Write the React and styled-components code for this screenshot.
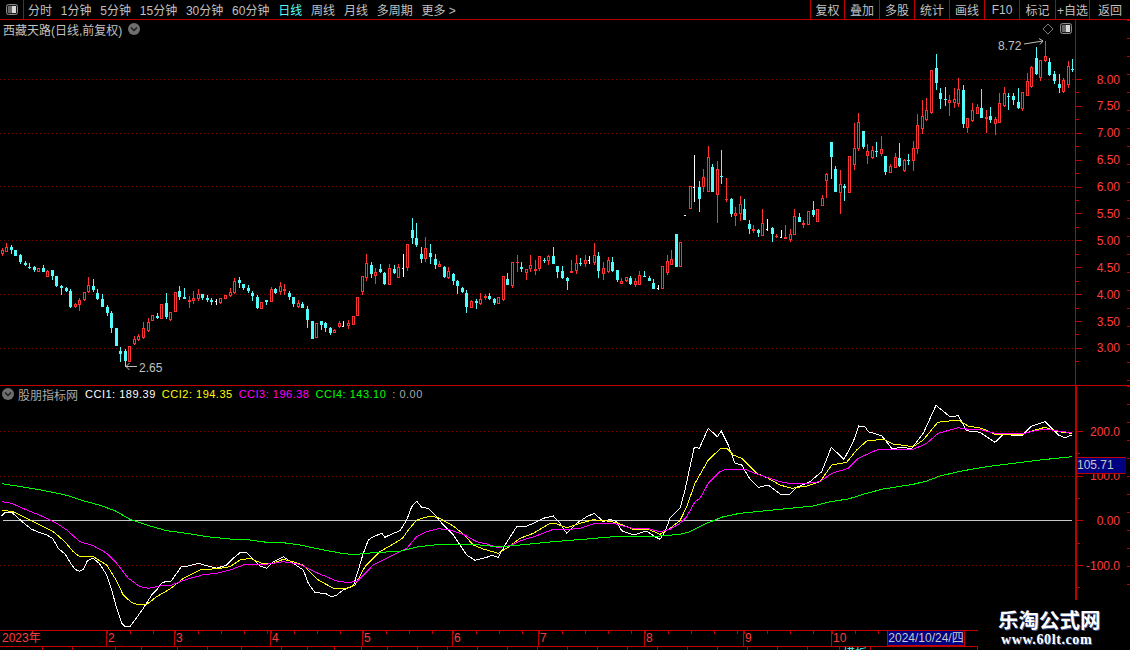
import React from "react";
import styled, { createGlobalStyle } from "styled-components";

const RED_LINE = "#c00000";
const RED_TEXT = "#ff3c3c";
const GRID_RED = "#7c0000";
const CYAN = "#54fcfc";
const CJK = `"Liberation Sans", "Noto Sans CJK SC", sans-serif`;

// candles read off the chart: [x, body top, body bottom, high, low, kind], in 3x crops
const candleRuns = [
  {
    x0: 0, y0: 210,
    rows: [
      [7,121,133,115,138,"r"],[19,111,125,99,127,"r"],[34,110,120,105,132,"c"],[46,120,137,120,137,"c"],
      [61,135,155,131,161,"c"],[76,158,165,153,169,"c"],[88,172,172,160,177,"c"],[103,172,180,168,186,"c"],
      [115,174,186,174,186,"r"],[130,174,186,165,186,"c"],[142,184,201,180,202,"r"],[157,180,198,180,210,"c"],
      [169,198,228,198,232,"c"],[184,228,233,225,255,"c"],[199,234,242,231,246,"c"],[211,243,291,238,294,"c"],
      [226,282,291,279,294,"r"],[238,271,285,265,303,"r"],[253,247,271,245,273,"r"],[265,225,247,201,249,"r"],
      [280,228,241,207,245,"c"],[292,249,267,237,270,"c"],[307,267,291,252,291,"c"],[322,291,309,285,318,"c"],
      [334,309,354,303,369,"c"],[349,354,408,354,408,"c"],[361,423,431,411,456,"c"],[376,423,453,417,470,"c"],
      [388,408,456,408,456,"r"],[403,387,402,378,405,"r"],[415,378,390,372,393,"r"],[430,354,384,336,387,"r"],
      [445,336,363,324,366,"r"],[457,316,333,316,333,"r"],[472,318,324,309,327,"c"],[484,282,327,282,327,"r"],
      [499,279,321,249,327,"c"],[511,306,330,306,333,"r"],[526,246,306,246,306,"r"],[538,243,261,228,270,"c"],
      [553,262,266,234,267,"c"],[568,271,274,258,294,"r"],[580,264,273,243,282,"r"],[595,252,267,237,273,"r"],
      [607,252,264,252,270,"c"],[622,264,270,255,276,"c"],[634,270,274,264,285,"c"],[649,273,273,268,285,"w"],
      [661,264,279,264,282,"r"],[676,255,266,255,266,"r"],[691,246,258,234,261,"r"],[703,213,249,204,252,"r"],
      [718,210,219,201,234,"c"],[730,222,234,222,240,"c"],[745,234,243,225,249,"c"],[757,249,258,243,273,"c"],
      [772,261,294,255,297,"c"],[784,276,296,276,296,"r"],[799,270,274,270,285,"c"],[814,237,275,231,276,"r"],
      [826,237,249,234,252,"c"],[841,228,246,216,255,"r"],[853,237,243,222,255,"r"],[868,249,261,243,270,"c"],
      [880,261,282,261,291,"c"],[895,279,291,270,294,"r"],[907,282,294,276,294,"c"],[922,297,330,288,354,"c"],
      [937,333,387,333,387,"c"],[949,339,384,339,384,"r"],[964,333,345,333,360,"c"],[976,339,354,336,366,"c"],
      [991,354,369,351,375,"c"],[1003,360,369,357,369,"r"],[1018,339,351,333,354,"r"],[1030,348,348,333,348,"w"],
      [1045,339,348,330,357,"r"],[1060,318,345,318,345,"r"],[1072,262,318,262,318,"r"],
    ],
  },
  {
    x0: 340, y0: 210,
    rows: [
      [67,198,246,198,255,"r"],[79,159,204,132,213,"r"],[94,165,192,156,204,"c"],[106,186,198,174,222,"r"],
      [121,177,186,162,189,"c"],[133,189,222,186,225,"c"],[148,174,225,162,225,"r"],[163,177,189,165,192,"c"],
      [175,171,204,162,204,"r"],[190,175,175,132,201,"w"],[202,102,174,102,183,"r"],[217,60,84,24,102,"c"],
      [229,84,105,39,111,"c"],[244,132,147,111,159,"c"],[256,114,147,81,156,"r"],[271,129,141,102,162,"c"],
      [286,147,165,132,177,"c"],[298,162,171,153,171,"r"],[313,171,201,168,204,"c"],[325,183,204,171,207,"r"],
      [340,192,213,189,225,"c"],[352,213,228,210,252,"c"],[367,234,246,231,249,"c"],[379,249,291,240,309,"c"],
      [394,273,294,270,294,"r"],[409,273,279,267,297,"c"],[421,267,282,249,285,"r"],[436,258,264,252,270,"r"],
      [448,258,267,249,270,"c"],[463,267,279,264,285,"c"],[475,261,282,261,282,"r"],[490,198,270,198,273,"r"],
      [502,207,225,189,225,"c"],[517,156,228,156,234,"r"],[532,156,156,135,186,"r"],[544,171,174,156,186,"c"],
      [559,177,189,177,210,"r"],[571,165,177,135,186,"r"],[586,177,183,150,195,"r"],[598,138,177,138,183,"r"],
      [613,150,150,144,159,"c"],[625,138,153,135,165,"r"],[640,138,162,111,162,"c"],[652,168,186,168,204,"c"],
      [667,183,204,168,207,"c"],[682,204,213,201,240,"c"],[694,183,189,150,189,"r"],[709,159,183,135,192,"r"],
      [721,159,159,144,168,"c"],[736,150,162,135,171,"r"],[748,150,150,138,162,"w"],[763,135,159,99,165,"r"],
      [775,138,183,126,204,"c"],[790,174,192,156,210,"r"],[805,150,186,141,189,"r"],[817,156,183,141,186,"c"],
      [832,180,210,180,216,"c"],[844,213,221,204,222,"r"],[859,201,213,201,216,"r"],[871,204,222,198,225,"c"],
      [886,213,225,204,231,"r"],[898,195,225,183,225,"r"],[913,198,198,183,201,"c"],[928,204,213,198,213,"c"],
      [940,219,237,207,237,"c"],[955,234,234,225,240,"w"],[967,168,237,168,237,"r"],[982,153,189,135,195,"r"],
      [994,147,165,120,165,"r"],[1009,72,171,72,171,"c"],[1021,96,171,96,171,"r"],
    ],
  },
  {
    x0: 660, y0: 130,
    rows: [
      [75,256,256,256,256,"w"],[91,168,236,168,236,"r"],[103,170,170,75,216,"w"],[118,171,207,153,246,"c"],
      [130,141,171,117,186,"r"],[145,81,186,48,186,"r"],[157,111,186,102,186,"c"],[172,117,194,93,279,"r"],
      [184,139,139,60,162,"c"],[199,208,208,144,216,"r"],[214,207,252,204,261,"c"],[226,249,258,231,288,"r"],
      [241,222,251,198,273,"r"],[253,237,270,207,270,"c"],[268,282,297,270,312,"c"],[280,297,303,285,309,"r"],
      [295,300,309,297,321,"c"],[307,279,318,237,318,"r"],[322,298,298,267,303,"w"],[337,294,312,291,336,"c"],
      [349,318,318,312,324,"r"],[364,322,322,300,324,"w"],[376,321,327,285,327,"r"],[391,312,330,297,336,"r"],
      [403,258,315,237,315,"r"],[418,261,276,249,276,"c"],[430,279,285,270,294,"r"],[445,243,285,243,285,"r"],
      [460,240,255,213,261,"c"],[472,237,276,237,276,"r"],[487,204,228,195,228,"r"],[499,132,153,129,204,"r"],
      [514,36,81,36,147,"c"],[526,117,186,108,186,"c"],[541,162,189,120,252,"r"],[553,169,174,162,213,"c"],
      [568,78,189,78,189,"r"],[583,54,105,-20,120,"r"],[595,-24,57,-51,63,"r"],[610,3,51,3,57,"c"],
      [622,63,78,42,102,"r"],[637,60,84,48,87,"r"],[649,64,64,36,81,"c"],[664,57,72,18,78,"r"],
      [676,78,126,78,135,"c"],[691,108,129,102,129,"r"],[706,81,114,69,114,"r"],[718,84,108,39,111,"c"],
      [733,90,123,87,126,"r"],[745,91,91,72,105,"c"],[760,54,93,33,123,"r"],
    ],
  },
  {
    x0: 900, y0: 40,
    rows: [
      [52,255,327,222,342,"r"],[67,228,267,180,282,"r"],[79,210,240,174,243,"r"],[94,90,219,90,222,"r"],
      [109,84,129,42,150,"c"],[121,159,177,144,207,"c"],[136,178,178,141,198,"c"],[148,180,189,165,228,"r"],
      [163,177,189,144,204,"r"],[175,147,192,114,201,"r"],[190,150,252,135,264,"c"],[202,234,264,234,279,"r"],
      [217,210,243,189,246,"r"],[232,201,222,192,222,"r"],[244,204,234,147,234,"c"],[259,231,237,210,279,"r"],
      [271,228,240,201,249,"c"],[286,237,252,231,285,"r"],[298,189,249,159,249,"r"],[313,159,198,141,201,"r"],
      [325,168,168,159,210,"c"],[340,168,180,159,195,"c"],[355,186,204,144,207,"c"],[367,156,207,156,213,"r"],
      [382,123,168,99,168,"r"],[394,81,141,78,144,"r"],[409,54,102,21,105,"c"],[421,60,114,60,123,"r"],
      [436,48,63,3,66,"r"],[448,66,105,54,108,"c"],[463,102,123,93,132,"c"],[478,132,144,102,159,"c"],
      [490,120,156,114,159,"r"],[505,78,135,63,144,"r"],[517,87,87,57,96,"c"],
    ],
  },
];

// each curve is three runs of points, read from crops at these origins
const CROP_A = [0, 480];
const CROP_B = [340, 480];
const CROP_C = [640, 400];

const curves = [
  {
    color: "#ffffff",
    a: [5,107,15,97,35,97,50,110,70,128,95,148,115,156,140,165,158,175,175,205,195,222,212,250,225,268,238,274,250,268,262,243,278,234,298,250,320,285,335,330,350,385,365,430,375,440,390,440,405,420,430,385,455,345,470,330,485,310,500,303,512,305,530,280,545,258,565,258,595,250,620,257,650,265,680,255,700,235,720,218,740,218,760,238,780,258,800,265,820,245,850,230,880,250,910,270,925,310,945,338,975,340,995,350,1010,345,1030,330,1060,318,1075,270,1090,220,1105,180,1120,170,1145,160,1155,172,1175,162,1200,152],
    b: [200,120,215,80,230,64,245,82,265,85,285,105,310,135,340,165,360,195,380,225,405,241,440,232,455,226,475,232,495,195,530,140,555,140,575,132,610,115,640,108,660,130,680,160,710,130,740,110,763,100,790,125,810,118,830,125,845,152,880,165,920,153,945,170,960,178,975,155,990,115,1020,85],
    c: [135,270,150,200,163,142,178,145,205,85,232,110,244,93,265,135,285,190,305,195,330,238,355,262,385,255,420,282,450,283,470,262,510,245,545,215,574,142,612,178,640,125,656,78,675,80,685,95,725,107,755,145,785,143,815,145,850,100,888,16,905,30,930,50,955,47,980,92,1020,97,1065,127,1090,103,1145,108,1175,78,1215,65,1255,105,1275,113,1295,105],
  },
  {
    color: "#ffff00",
    a: [5,92,20,92,45,97,70,110,100,125,130,140,160,155,195,185,220,215,240,231,280,230,320,255,345,295,370,345,395,368,420,375,440,373,470,350,510,327,550,295,600,270,660,265,690,260,720,240,750,235,790,252,820,250,850,238,880,245,910,255,950,297,1000,325,1040,325,1065,315,1095,260,1140,215,1200,180],
    b: [190,172,205,150,230,120,270,108,295,113,340,138,370,162,400,195,430,207,475,220,510,198,540,175,580,160,630,130,650,132,680,143,720,130,760,119,800,123,830,128,880,148,930,150,960,163,990,145,1020,122],
    c: [140,320,165,250,205,180,240,147,260,145,280,165,305,175,350,220,385,235,420,255,455,265,500,258,540,245,575,195,620,187,650,150,680,123,730,118,760,132,820,140,850,120,893,67,955,60,985,78,1025,85,1065,103,1145,104,1175,93,1215,82,1255,95,1295,100],
  },
  {
    color: "#ff00ff",
    a: [5,65,35,70,80,90,130,110,170,130,200,150,240,185,280,197,320,220,350,250,385,295,420,320,445,325,480,318,515,315,560,298,610,284,650,280,690,270,730,255,790,254,850,245,900,253,950,278,1010,303,1040,307,1070,305,1120,255,1160,235,1200,215],
    b: [200,205,230,170,260,155,295,146,330,150,370,163,410,185,440,192,475,203,510,197,540,183,590,167,640,148,680,149,720,145,760,132,820,130,880,146,925,146,960,155,990,148,1020,130],
    c: [140,350,165,305,180,295,205,250,240,215,258,208,315,208,350,222,420,245,445,250,500,250,540,245,575,220,625,205,655,175,710,150,820,148,860,130,895,100,955,83,985,88,1025,90,1065,100,1145,102,1185,92,1215,87,1255,93,1295,98],
  },
  {
    color: "#00ff00",
    a: [5,11,50,18,100,26,150,35,200,46,250,62,300,76,345,92,390,118,440,135,500,152,560,160,620,170,700,178,750,180,800,187,850,188,900,195,960,208,1020,219,1060,224,1120,218,1200,214],
    b: [230,201,300,193,400,193,460,199,510,198,570,192,640,185,740,177,820,170,950,169,1020,163],
    c: [150,395,200,370,250,350,300,340,400,330,520,318,570,305,625,297,680,280,730,267,820,253,860,243,900,228,960,214,1040,200,1120,190,1200,180,1295,170],
  },
];

const toPoints = (list, [x0, y0]) => {
  const out = [];
  for (let i = 0; i < list.length; i += 2) {
    out.push(`${(x0 + list[i] / 3).toFixed(1)},${(y0 + list[i + 1] / 3).toFixed(1)}`);
  }
  return out.join(" ");
};

const priceLabels = ["8.00", "7.50", "7.00", "6.50", "6.00", "5.50", "5.00", "4.50", "4.00", "3.50", "3.00"];
const cciLabels = ["200.0", "100.0", "0.00", "-100.0"];
const toolTabs = ["分时", "1分钟", "5分钟", "15分钟", "30分钟", "60分钟", "日线", "周线", "月线", "多周期", "更多 >"];
const toolButtons = [
  ["复权", 34], ["叠加", 35], ["多股", 35], ["统计", 35], ["画线", 35], ["F10", 35], ["标记", 36], ["+自选", 34], ["返回", 41],
];
const months = [["2023年", 106], ["2", 68], ["3", 96], ["4", 92], ["5", 90], ["6", 86], ["7", 106], ["8", 99], ["9", 88], ["10", 56]];
const footTabs = [43, 30, 43, 26, 36, 30, 34, 40, 26, 27, 27, 26, 30, 30, 30, 30, 30, 30, 30, 30, 30, 30, 30, 30, 30, 30, 32, 31, 107];

function Candle({ row, x0, y0 }) {
  const [zx, top, bot, hi, lo, kind] = row;
  const col = Math.floor(x0 + zx / 3);
  const yTop = Math.round(y0 + top / 3);
  const yBot = Math.round(y0 + bot / 3);
  const yHi = Math.round(y0 + hi / 3);
  const yLo = Math.round(y0 + lo / 3);
  const color = kind === "c" ? CYAN : kind === "w" ? "#ffffff" : "#ff3232";
  const wick = <rect x={col} y={yHi} width={1} height={Math.max(yLo - yHi, 1)} fill={color} />;
  if (top === bot) {
    return (
      <g>
        {wick}
        <rect x={col - 1} y={yTop} width={kind === "w" ? 2 : 3} height={1} fill={color} />
      </g>
    );
  }
  if (kind === "r" && yBot - yTop > 2) {
    return (
      <g>
        {wick}
        <rect x={col - 0.5} y={yTop + 0.5} width={2} height={yBot - yTop - 1} fill="#000" stroke={color} />
      </g>
    );
  }
  return (
    <g>
      {wick}
      <rect x={col - 1} y={yTop} width={3} height={Math.max(yBot - yTop, 2)} fill={color} />
    </g>
  );
}

function FoldIcon() {
  return (
    <svg width="12" height="12" viewBox="0 0 12 12">
      <circle cx="6" cy="6" r="6" fill="#6e6e6e" />
      <path d="M3 4.5 L6 7.5 L9 4.5" fill="none" stroke="#1c1c1c" strokeWidth="1.4" />
    </svg>
  );
}

function PanelIcon() {
  return (
    <svg width="12" height="11" viewBox="0 0 12 11">
      <rect x="0.5" y="0.5" width="11" height="10" rx="2" fill="#1a1a1a" stroke="#8c8c8c" />
      <rect x="2" y="2" width="4" height="7" fill="#6a6a6a" />
      <rect x="6" y="2" width="4" height="7" fill="#d8d8d8" />
    </svg>
  );
}

function App() {
  return (
    <>
      <GlobalStyle />
      <Page>
        <Toolbar>
          <ToggleCell>
            <PanelIcon />
          </ToggleCell>
          <TabGroup>
            {toolTabs.map((t) => (
              <ToolTab key={t} $active={t === "日线"}>
                {t}
              </ToolTab>
            ))}
          </TabGroup>
          <ButtonGroup>
            {toolButtons.map(([t, w]) => (
              <ToolButton key={t} $w={w}>
                {t}
              </ToolButton>
            ))}
          </ButtonGroup>
        </Toolbar>

        <MainPanel>
          <ChartArea>
            <ChartTitle>
              西藏天路(日线,前复权)
              <FoldIcon />
            </ChartTitle>
            <ChartSvg width="1075" height="365" viewBox="0 20 1075 365" shapeRendering="crispEdges">
              {[79, 133, 186, 240, 294, 348].map((y) => (
                <line key={y} x1="0" x2="1075" y1={y + 0.5} y2={y + 0.5} stroke={GRID_RED} strokeDasharray="1 3" />
              ))}
              {candleRuns.map((run) =>
                run.rows.map((row) => <Candle key={`${run.x0}-${row[0]}`} row={row} x0={run.x0} y0={run.y0} />)
              )}
              <g fill="none" stroke="#c0c0c0" shapeRendering="auto">
                <path d="M137 366.5 H126 M129.5 363 L126 366.5 L129.5 370" />
                <path d="M1024 44 L1043 41 M1039 38.5 L1043 41 L1040 44.5" />
                <path d="M1048 24 L1053 29 L1048 34 L1043 29 Z" stroke="#777" />
              </g>
            </ChartSvg>
            <PriceNote $x={139} $y={341}>2.65</PriceNote>
            <PriceNote $x={998} $y={19}>8.72</PriceNote>
            <CornerIcon>
              <PanelIcon />
            </CornerIcon>
          </ChartArea>
          <AxisColumn $top={45.5}>
            {priceLabels.map((v) => (
              <AxisRow key={v} $h={26.9}>{v}</AxisRow>
            ))}
          </AxisColumn>
        </MainPanel>

        <IndicatorPanel>
          <ChartArea>
            <Legend>
              <FoldIcon />
              <LegendName>股朋指标网</LegendName>
              <LegendValue $color="#ffffff">CCI1: 189.39</LegendValue>
              <LegendValue $color="#ffff00">CCI2: 194.35</LegendValue>
              <LegendValue $color="#ff00ff">CCI3: 196.38</LegendValue>
              <LegendValue $color="#00ff00">CCI4: 143.10</LegendValue>
              <LegendValue $color="#a8a8a8">: 0.00</LegendValue>
            </Legend>
            <ChartSvg width="1075" height="244" viewBox="0 386 1075 244" shapeRendering="crispEdges">
              {[431, 476, 565].map((y) => (
                <line key={y} x1="0" x2="1075" y1={y + 0.5} y2={y + 0.5} stroke={GRID_RED} strokeDasharray="1 3" />
              ))}
              <line x1="3" x2="1072" y1="520.5" y2="520.5" stroke="#c8c8c8" />
              {curves.map((c) => (
                <polyline
                  key={c.color}
                  fill="none"
                  stroke={c.color}
                  points={`${toPoints(c.a, CROP_A)} ${toPoints(c.b, CROP_B)} ${toPoints(c.c, CROP_C)}`}
                />
              ))}
            </ChartSvg>
          </ChartArea>
          <AxisColumn $top={22.7} $thick>
            {cciLabels.map((v) => (
              <AxisRow key={v} $h={44.7}>{v}</AxisRow>
            ))}
            <CurrentValue>105.71</CurrentValue>
          </AxisColumn>
        </IndicatorPanel>

        <DateStrip>
          {months.map(([m, w], i) => (
            <MonthCell key={m} $w={w} $plain={i === 0}>
              {m}
            </MonthCell>
          ))}
          <DateBox>2024/10/24/四</DateBox>
        </DateStrip>
        <FootTabs>
          {footTabs.map((w, i) => (
            <FootTab key={i} $w={w}>
              {i === 27 ? "模板" : ""}
            </FootTab>
          ))}
        </FootTabs>

        <Watermark>
          <WatermarkTitle>乐淘公式网</WatermarkTitle>
          <WatermarkUrl>www.60lt.com</WatermarkUrl>
        </Watermark>
      </Page>
    </>
  );
}

export default App;

const GlobalStyle = createGlobalStyle`
  html, body {
    margin: 0;
    background: #000;
    overflow: hidden;
  }
`;
const Page = styled.div`
  position: relative;
  display: flex;
  flex-direction: column;
  width: 1130px;
  height: 650px;
  overflow: hidden;
  background: #000;
  color: #c0c0c0;
  font-family: ${CJK};
  font-size: 12px;
`;
const Toolbar = styled.div`
  display: flex;
  flex: 0 0 20px;
  box-sizing: border-box;
  border-bottom: 1px solid ${RED_LINE};
`;
const ToggleCell = styled.div`
  display: flex;
  align-items: center;
  justify-content: center;
  box-sizing: border-box;
  width: 24px;
  border-right: 1px solid ${RED_LINE};
`;
const TabGroup = styled.div`
  display: flex;
  align-items: center;
  gap: 8.8px;
  padding-left: 4px;
`;
const ToolTab = styled.span`
  color: ${(p) => (p.$active ? CYAN : "#c0c0c0")};
  white-space: nowrap;
`;
const ButtonGroup = styled.div`
  display: flex;
  margin-left: auto;
`;
const ToolButton = styled.div`
  display: flex;
  align-items: center;
  justify-content: center;
  box-sizing: border-box;
  width: ${(p) => p.$w}px;
  border-left: 1px solid ${RED_LINE};
  white-space: nowrap;
`;
const MainPanel = styled.div`
  display: flex;
  flex: 0 0 366px;
  box-sizing: border-box;
  border-bottom: 1px solid ${RED_LINE};
`;
const IndicatorPanel = styled.div`
  display: flex;
  flex: 0 0 244px;
`;
const ChartArea = styled.div`
  position: relative;
  width: 1075px;
  flex: none;
`;
const ChartSvg = styled.svg`
  display: block;
`;
const ChartTitle = styled.div`
  position: absolute;
  top: 2px;
  left: 3px;
  display: flex;
  align-items: center;
  gap: 6px;
  height: 14px;
  white-space: nowrap;
`;
const PriceNote = styled.span`
  position: absolute;
  left: ${(p) => p.$x}px;
  top: ${(p) => p.$y}px;
  line-height: 14px;
  color: #c0c0c0;
`;
const CornerIcon = styled.div`
  position: absolute;
  top: 3px;
  left: 1060px;
  line-height: 0;
`;
const AxisColumn = styled.div`
  position: relative;
  flex: 1;
  box-sizing: border-box;
  padding-top: ${(p) => p.$top}px;
  padding-right: 10px;
  border-left: ${(p) => (p.$thick ? 2 : 1)}px solid ${RED_LINE};
  color: ${RED_TEXT};
  text-align: right;
  background: linear-gradient(${RED_LINE} 1px, transparent 1px) right 0 top 0 / 3px 18px repeat-y;
`;
const AxisRow = styled.div`
  position: relative;
  height: ${(p) => p.$h}px;
  line-height: ${(p) => p.$h + 2}px;
  &::before {
    content: "";
    position: absolute;
    left: 0;
    top: 50%;
    width: 6px;
    height: 1px;
    background: ${RED_LINE};
  }
  &::after {
    content: "";
    position: absolute;
    left: 0;
    top: 100%;
    width: 3px;
    height: 1px;
    background: ${RED_LINE};
  }
`;
const CurrentValue = styled.div`
  position: absolute;
  top: 71px;
  left: 0;
  box-sizing: border-box;
  width: 49px;
  height: 17px;
  border-top: 1px solid ${RED_LINE};
  border-bottom: 1px solid ${RED_LINE};
  background: #000080;
  color: #c8c8c8;
  line-height: 15px;
  text-align: left;
`;
const Legend = styled.div`
  position: absolute;
  top: 1px;
  left: 2px;
  display: flex;
  align-items: center;
  height: 14px;
  white-space: nowrap;
`;
const LegendName = styled.span`
  margin: 0 7px 0 4px;
  color: #a8a8a8;
`;
const LegendValue = styled.span`
  margin-right: 6px;
  color: ${(p) => p.$color};
  font-size: 11px;
  letter-spacing: 0.5px;
`;
const DateStrip = styled.div`
  display: flex;
  flex: 0 0 16px;
  box-sizing: border-box;
  width: 978px;
  border-top: 1px solid ${RED_LINE};
`;
const MonthCell = styled.div`
  box-sizing: border-box;
  width: ${(p) => p.$w}px;
  padding-left: ${(p) => (p.$plain ? 2 : 1)}px;
  border-left: ${(p) => (p.$plain ? "none" : `1px solid ${RED_LINE}`)};
  color: ${RED_TEXT};
  line-height: 15px;
  background: ${(p) =>
    p.$plain ? "none" : `linear-gradient(90deg, ${RED_LINE} 1px, transparent 1px) 23px 0 / 23px 3px repeat-x`};
`;
const DateBox = styled.div`
  box-sizing: border-box;
  width: 78px;
  border: 1px solid ${RED_LINE};
  border-top: none;
  background: #000080;
  color: #c8c8c8;
  line-height: 14px;
  text-align: center;
  white-space: nowrap;
`;
const FootTabs = styled.div`
  display: flex;
  flex: 0 0 4px;
  box-sizing: border-box;
  width: 978px;
  border-top: 1px solid ${RED_LINE};
`;
const FootTab = styled.div`
  box-sizing: border-box;
  width: ${(p) => p.$w}px;
  border-right: 1px solid ${RED_LINE};
  color: ${CYAN};
  line-height: 14px;
  text-align: center;
`;
const Watermark = styled.div`
  position: absolute;
  right: 0;
  bottom: 0;
  display: flex;
  flex-direction: column;
  box-sizing: border-box;
  width: 152px;
  height: 50px;
  padding: 8px 0 0 20px;
  background: #000;
`;
const WatermarkTitle = styled.div`
  color: #fff;
  font-family: "Noto Sans CJK SC", sans-serif;
  font-size: 20.5px;
  font-weight: 700;
  line-height: 23px;
  text-shadow: 1px 1px 0 #39508c;
  white-space: nowrap;
`;
const WatermarkUrl = styled.div`
  margin: 2px 0 0 3px;
  color: #fff;
  font-family: "Liberation Serif", serif;
  font-size: 14px;
  font-weight: 700;
  line-height: 14px;
  letter-spacing: 0.6px;
  text-shadow: 1px 1px 0 #39508c;
`;
